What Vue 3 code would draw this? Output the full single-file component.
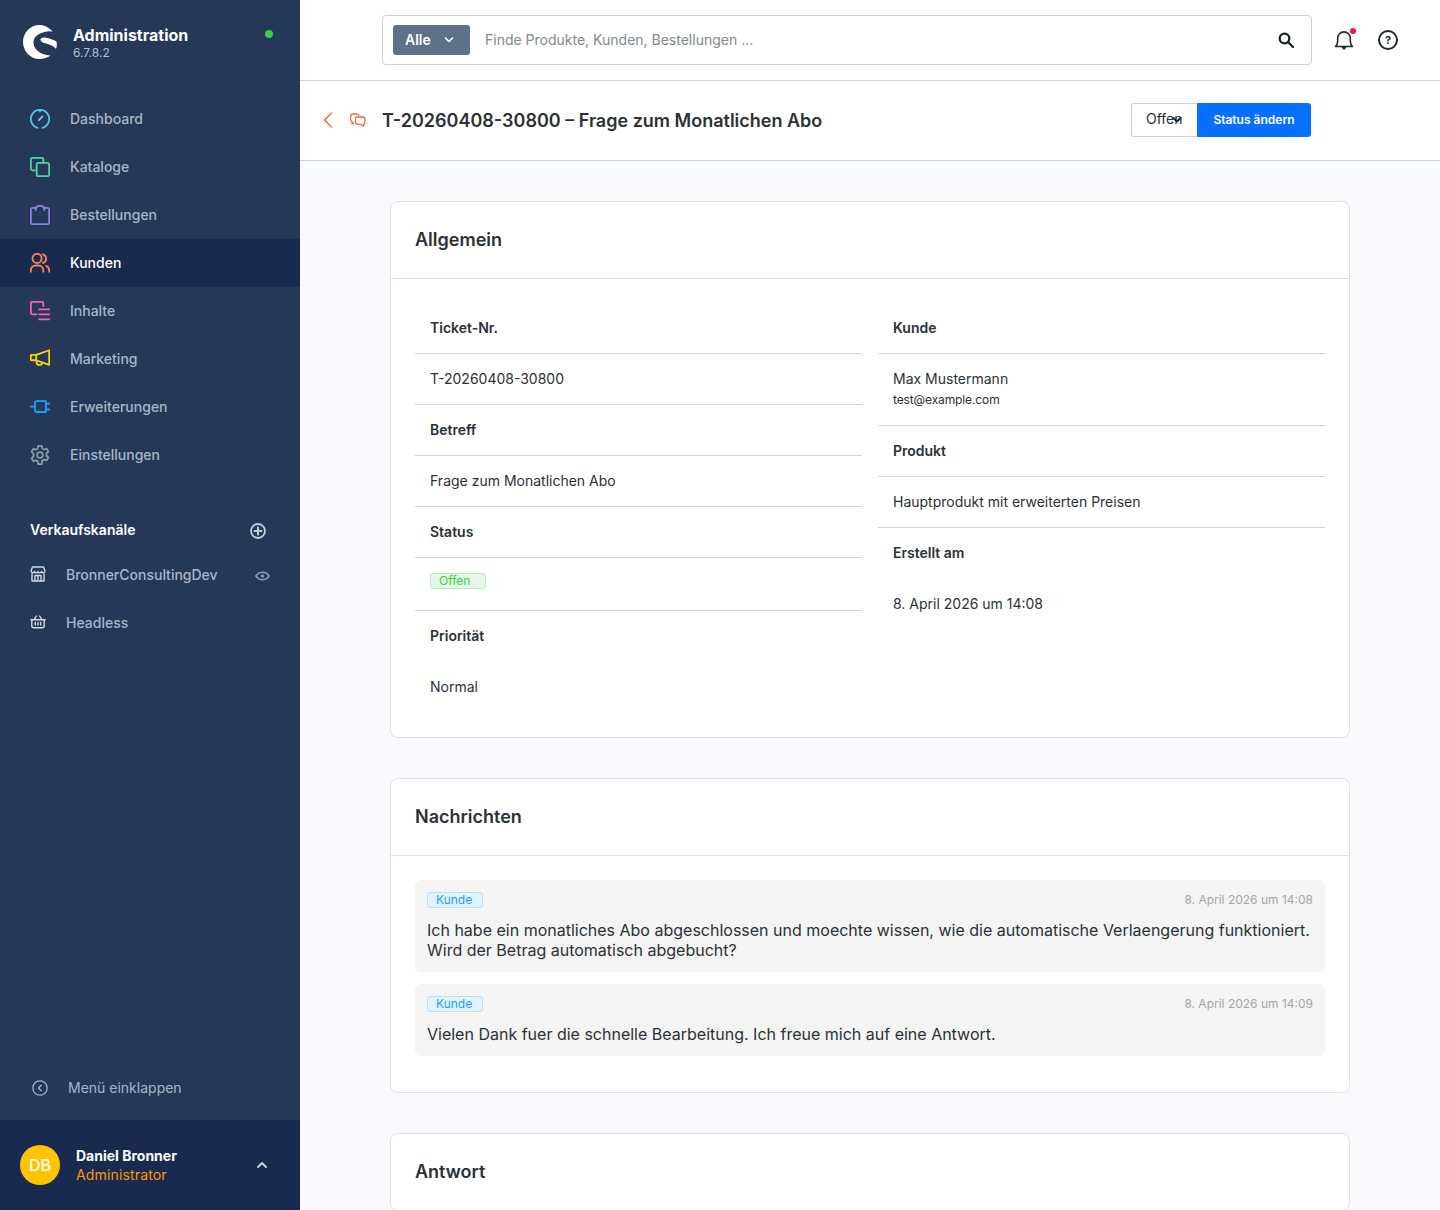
<template>
    <div class="admin">
        <aside class="sidebar">
            <div class="brand">
                <svg class="logo" viewBox="0 0 34 34">
                    <path fill="#fff" d="M29.500 6.500C26 2.500 21.500 0 16.500 0 7.400 0 0 7.600 0 17s7.400 17 16.500 17c4 0 8-1.200 11-3.500-7.500-.5-17-4.500-17-13 0-7 7.500-11 19-11.500z" />
                    <path fill="#fff" d="M17.500 14.500c0-1.800 2.500-2.500 5.500-1.800 4.500 1 8.500 2.300 10.500 3.800.5 2.500.5 5-.5 7.500-2.500-3.500-8-5-11.500-6-2.500-.7-4-1.700-4-3.500z" />
                </svg>
                <div class="brand-text">
                    <div class="brand-name">Administration</div>
                    <div class="brand-version">6.7.8.2</div>
                </div>
                <span class="status-dot"></span>
            </div>

            <nav class="nav">
                <a v-for="item in navItems" :key="item.label" class="nav-item" :class="{ active: item.active }">
                    <svg class="nav-icon" viewBox="0 0 24 24" fill="none" :stroke="item.color" stroke-width="2.200" stroke-linecap="round" stroke-linejoin="round">
                        <path v-for="d in item.paths" :key="d" :d="d" />
                    </svg>
                    <span class="nav-label">{{ item.label }}</span>
                </a>
            </nav>

            <div class="channels-head">
                <span class="channels-title">Verkaufskanäle</span>
                <svg class="plus" viewBox="0 0 16 16" fill="none" stroke="#c3cddc" stroke-width="1.800" stroke-linecap="round">
                    <circle cx="8" cy="8" r="7" />
                    <path d="M8 4.500v7M4.500 8h7" stroke-width="2" />
                </svg>
            </div>
            <a class="channel">
                <svg class="channel-icon" viewBox="0 0 16 16" fill="none" stroke="#d3d9e4" stroke-width="1.400" stroke-linejoin="round">
                    <path d="M2.500 1h11l1.500 4a1.800 1.800 0 0 1-3.500.5 1.800 1.800 0 0 1-3.500 0 1.800 1.800 0 0 1-3.500 0A1.800 1.800 0 0 1 1 5z" />
                    <path d="M2 7.500V15h12V7.500M5 15V9.500h6V15M8 9.500V15" />
                </svg>
                <span>BronnerConsultingDev</span>
                <svg class="eye" viewBox="0 0 16 10" fill="none" stroke="#8e9cb2" stroke-width="1.800">
                    <path d="M1 5c1.800-2.700 4.200-4 7-4s5.200 1.300 7 4c-1.800 2.700-4.200 4-7 4s-5.200-1.300-7-4z" />
                    <circle cx="8" cy="5" r="1.800" fill="#8e9cb2" stroke="none" />
                </svg>
            </a>
            <a class="channel">
                <svg class="channel-icon" viewBox="0 0 16 16" fill="none" stroke="#d3d9e4" stroke-width="1.400" stroke-linejoin="round" stroke-linecap="round">
                    <path d="M.8 5.800h14.400M1.800 5.800v6a2 2 0 0 0 2 2h8.400a2 2 0 0 0 2-2v-6M4 5.800 6.300 2M12 5.800 9.700 2M5.300 8.500v2.500M8 8.500v2.500M10.700 8.500v2.500" />
                </svg>
                <span>Headless</span>
            </a>

            <a class="collapse">
                <svg viewBox="0 0 16 16" fill="none" stroke="#a9b5c9" stroke-width="1.300" stroke-linecap="round" stroke-linejoin="round">
                    <circle cx="8" cy="8" r="7.200" />
                    <path d="M9.200 5.200 6.500 8l2.700 2.800" />
                </svg>
                <span class="nav-label">Menü einklappen</span>
            </a>

            <div class="user">
                <div class="avatar">DB</div>
                <div class="user-text">
                    <div class="user-name">Daniel Bronner</div>
                    <div class="user-role">Administrator</div>
                </div>
                <svg class="user-chevron" viewBox="0 0 12 8" fill="none" stroke="#c3cddc" stroke-width="2" stroke-linecap="round" stroke-linejoin="round">
                    <path d="M2 6l4-4 4 4" />
                </svg>
            </div>
        </aside>

        <main class="main">
            <header class="topbar">
                <div class="search">
                    <button class="search-type">
                        <span class="nudge">Alle</span>
                        <svg viewBox="0 0 10 6" fill="none" stroke="#fff" stroke-width="1.600" stroke-linecap="round" stroke-linejoin="round">
                            <path d="M1.500 1 5 4.500 8.500 1" />
                        </svg>
                    </button>
                    <span class="search-placeholder nudge">Finde Produkte, Kunden, Bestellungen ...</span>
                    <svg class="search-icon" viewBox="0 0 16 16" fill="none" stroke="#1a2129" stroke-width="2.300" stroke-linecap="round">
                        <circle cx="6.500" cy="6.500" r="4.800" />
                        <path d="M10.200 10.200 15 15" />
                    </svg>
                </div>
                <div class="bell">
                    <svg viewBox="0 0 20 22" fill="none" stroke="#1f2933" stroke-width="1.600" stroke-linecap="round" stroke-linejoin="round">
                        <path d="M1.500 17.500c1.400-1.200 2.200-3 2.200-5.500V9.200a6.300 6.300 0 0 1 12.600 0V12c0 2.500.8 4.300 2.200 5.500z" />
                        <path d="M8.500 18.300 10 20l1.500-1.700z" fill="#1f2933" />
                    </svg>
                    <span class="bell-dot"></span>
                </div>
                <div class="help">?</div>
            </header>

            <div class="smartbar">
                <svg class="back" viewBox="0 0 10 16" fill="none" stroke="#f56a38" stroke-width="1.400" stroke-linecap="round" stroke-linejoin="round">
                    <path d="M8.500 1 1.500 8l7 7" />
                </svg>
                <svg class="ticket" viewBox="0 0 16 14" fill="none" stroke="#f56a38" stroke-width="1.300" stroke-linejoin="round">
                    <path d="M4 9.500 2 11V8.800C1 8.200.6 7.400.6 6.300V3.500C.6 2 1.600 1 3 1h3.500c1.300 0 2.300.9 2.500 2" />
                    <path d="M7 4h5.500C14 4 15 5 15 6.400v2.300c0 1.200-.5 2-1.400 2.500V13.500l-2.700-2.200H8c-1.400 0-2.500-1.100-2.500-2.500V5.500C5.500 4.600 6 4 7 4z" />
                </svg>
                <h1 class="title">T-20260408-30800 – Frage zum Monatlichen Abo</h1>
                <div class="actions">
                    <div class="status-select">
                        Offen
                        <svg viewBox="0 0 10 6" fill="none" stroke="#1f2933" stroke-width="2" stroke-linecap="round" stroke-linejoin="round">
                            <path d="M1.500 1 5 4.500 8.500 1" />
                        </svg>
                    </div>
                    <button class="status-btn">Status ändern</button>
                </div>
            </div>

            <div class="content">
                <section class="card">
                    <h2 class="card-title">Allgemein</h2>
                    <div class="card-body columns">
                        <dl class="col">
                            <div class="cell head">Ticket-Nr.</div>
                            <div class="cell">T-20260408-30800</div>
                            <div class="cell head">Betreff</div>
                            <div class="cell">Frage zum Monatlichen Abo</div>
                            <div class="cell head">Status</div>
                            <div class="cell status-cell"><span class="badge green">Offen</span></div>
                            <div class="cell head plain">Priorität</div>
                            <div class="cell plain">Normal</div>
                        </dl>
                        <dl class="col">
                            <div class="cell head">Kunde</div>
                            <div class="cell">
                                Max Mustermann
                                <div class="email">test@example.com</div>
                            </div>
                            <div class="cell head">Produkt</div>
                            <div class="cell">Hauptprodukt mit erweiterten Preisen</div>
                            <div class="cell head plain">Erstellt am</div>
                            <div class="cell plain">8. April 2026 um 14:08</div>
                        </dl>
                    </div>
                </section>

                <section class="card">
                    <h2 class="card-title">Nachrichten</h2>
                    <div class="card-body messages">
                        <article v-for="msg in messages" :key="msg.date" class="message">
                            <div class="message-head">
                                <span class="badge blue">Kunde</span>
                                <span class="message-date">{{ msg.date }}</span>
                            </div>
                            <p class="message-text">{{ msg.text }}</p>
                        </article>
                    </div>
                </section>

                <section class="card">
                    <h2 class="card-title">Antwort</h2>
                </section>
            </div>
        </main>
    </div>
</template>

<script setup>
const navItems = [
    {
        label: 'Dashboard',
        color: '#55c8ea',
        paths: ['M9 22.600A11 11 0 1 1 15 22.600', 'M15 9 10.500 13.500', 'M12 1v2'],
    },
    {
        label: 'Kataloge',
        color: '#4ed3a5',
        paths: ['M6 16H3a2 2 0 0 1-2-2V3a2 2 0 0 1 2-2h11a2 2 0 0 1 2 2v3', 'M10 7h11a2 2 0 0 1 2 2v12a2 2 0 0 1-2 2H10a2 2 0 0 1-2-2V9a2 2 0 0 1 2-2z'],
    },
    {
        label: 'Bestellungen',
        color: '#8c80ec',
        paths: ['M7 3.500H3a2 2 0 0 0-2 2V21a2 2 0 0 0 2 2h18a2 2 0 0 0 2-2V5.500a2 2 0 0 0-2-2h-4', 'M7 6V4a5 3 0 0 1 10 0v2'],
    },
    {
        label: 'Kunden',
        color: '#f9835a',
        active: true,
        paths: ['M8.500 12a5.500 5.500 0 1 0 0-11 5.500 5.500 0 0 0 0 11z', 'M1 22.500V21a6 6 0 0 1 6-6h3a6 6 0 0 1 6 6v1.500', 'M15.500 1.500a5.500 5.500 0 0 1 0 10.500', 'M19.500 15.500A6 6 0 0 1 23 21v1.500'],
    },
    {
        label: 'Inhalte',
        color: '#f762b0',
        paths: ['M8 16H3a2 2 0 0 1-2-2V3a2 2 0 0 1 2-2h11a2 2 0 0 1 2 2v3', 'M11 10h12M11 16h12M11 22h12'],
    },
    {
        label: 'Marketing',
        color: '#ffd400',
        paths: ['M7.500 7 23 1.500V19L7.500 13.500z', 'M7.500 7H2a1 1 0 0 0-1 1v4.500a1 1 0 0 0 1 1h5.500', 'M8 14v2.500A2.500 2.500 0 0 0 10.500 19H12a2.500 2.500 0 0 0 2.500-2.500'],
    },
    {
        label: 'Erweiterungen',
        color: '#189eff',
        paths: ['M8 5h11v13H8a2 2 0 0 1-2-2V7a2 2 0 0 1 2-2z', 'M1 11.500h5M19 8h4M19 15h4'],
    },
    {
        label: 'Einstellungen',
        color: '#8d98ab',
        paths: ['M12 8.500a3.500 3.500 0 1 0 0 7 3.500 3.500 0 0 0 0-7z', 'M10 1h4l.8 3.200 2.100 1.200 3.100-1 2 3.500-2.300 2.300v2.400L22 15l-2 3.500-3.100-1-2.100 1.200L14 23h-4l-.8-3.300-2.100-1.200-3.100 1L2 16l2.300-2.800v-2.400L2 8l2-3.500 3.100 1 2.100-1.200z'],
    },
];

const messages = [
    {
        date: '8. April 2026 um 14:08',
        text: 'Ich habe ein monatliches Abo abgeschlossen und moechte wissen, wie die automatische Verlaengerung funktioniert. Wird der Betrag automatisch abgebucht?',
    },
    {
        date: '8. April 2026 um 14:09',
        text: 'Vielen Dank fuer die schnelle Bearbeitung. Ich freue mich auf eine Antwort.',
    },
];
</script>

<style scoped>
.admin {
    display: flex;
    height: 1210px;
    overflow: hidden;
    font-family: Inter, "Liberation Sans", sans-serif;
    color: #2b3136;
}

/* Sidebar */
.sidebar {
    width: 300px;
    flex: none;
    display: flex;
    flex-direction: column;
    background: #253858;
}

.brand {
    display: flex;
    align-items: center;
    height: 95px;
    padding: 0 27px 11px 23px;
    box-sizing: border-box;
}

.logo {
    width: 34px;
    height: 34px;
    margin-right: 16px;
}

.brand-text {
    padding-top: 2px;
}

.brand-name {
    color: #fff;
    font-size: 16px;
    font-weight: 700;
    line-height: 20px;
}

.brand-version {
    color: #b3bfd1;
    font-size: 12px;
    line-height: 16px;
}

.status-dot {
    width: 8px;
    height: 8px;
    border-radius: 50%;
    background: #37d046;
    margin-left: auto;
    margin-bottom: 16px;
}

.nav {
    display: flex;
    flex-direction: column;
}

.nav-item {
    display: flex;
    align-items: center;
    height: 48px;
    padding-left: 30px;
    color: #a9b5c9;
    font-size: 14px;
    font-weight: 500;
}

.nav-item.active {
    background: #182b4e;
    color: #fff;
}

.nav-label {
    padding-bottom: 2px;
}

.nav-icon {
    width: 20px;
    height: 20px;
    margin-right: 20px;
}

.channels-head {
    display: flex;
    align-items: center;
    justify-content: space-between;
    margin-top: 33px;
    height: 36px;
    padding: 0 34px 0 30px;
    color: #fff;
    font-size: 14px;
    font-weight: 600;
}

.channels-title {
    padding-bottom: 2px;
}

.plus {
    width: 16px;
    height: 16px;
    margin-top: 2px;
}

.channel {
    display: flex;
    align-items: center;
    height: 48px;
    padding: 0 30px;
    color: #a9b5c9;
    font-size: 14px;
    font-weight: 500;
}

.channels-head + .channel {
    margin-top: 2px;
}

.channel-icon {
    width: 16px;
    height: 16px;
    margin-right: 20px;
}

.eye {
    width: 15px;
    height: 10px;
    margin-left: auto;
    margin-top: 3px;
}

.collapse {
    display: flex;
    align-items: center;
    margin-top: auto;
    height: 64px;
    padding-left: 32px;
    color: #a9b5c9;
    font-size: 14px;
}

.collapse svg {
    width: 16px;
    height: 16px;
    margin-right: 20px;
}

.user {
    display: flex;
    align-items: center;
    height: 90px;
    padding: 0 32px 0 20px;
    background: #182b4e;
}

.avatar {
    width: 40px;
    height: 40px;
    border-radius: 50%;
    background: #ffc400;
    color: #fff;
    font-size: 16px;
    font-weight: 500;
    line-height: 40px;
    text-align: center;
    margin-right: 16px;
}

.user-name {
    color: #fff;
    font-size: 14px;
    font-weight: 700;
    line-height: 19px;
}

.user-role {
    color: #ff9800;
    font-size: 14px;
    line-height: 19px;
    letter-spacing: 0.15px;
}

.user-chevron {
    width: 12px;
    height: 8px;
    margin-left: auto;
}

/* Top bar */
.main {
    flex: 1;
    min-width: 0;
    display: flex;
    flex-direction: column;
    background: #f9fafe;
}

.topbar {
    display: flex;
    align-items: center;
    height: 80px;
    flex: none;
    padding: 0 42px 0 82px;
    background: #fff;
    border-bottom: 1px solid #d1d3da;
}

.search {
    display: flex;
    align-items: center;
    width: 930px;
    height: 50px;
    box-sizing: border-box;
    padding: 0 17px 0 10px;
    border: 1px solid #cfd1d8;
    border-radius: 4px;
}

.nudge {
    padding-bottom: 2px;
}

.search-type {
    display: flex;
    align-items: center;
    justify-content: space-between;
    width: 77px;
    height: 30px;
    padding: 0 16px 0 12px;
    box-sizing: border-box;
    border: 0;
    border-radius: 3px;
    background: #5d7189;
    color: #fff;
    font-family: inherit;
    font-size: 14px;
    font-weight: 600;
}

.search-type svg {
    width: 10px;
    height: 6px;
}

.search-placeholder {
    margin-left: 15px;
    color: #7f8893;
    font-size: 14px;
}

.search-icon {
    width: 16px;
    height: 16px;
    margin-left: auto;
}

.bell {
    position: relative;
    width: 20px;
    height: 22px;
    margin-left: 22px;
}

.bell svg {
    display: block;
    width: 20px;
    height: 22px;
}

.bell-dot {
    position: absolute;
    top: -1px;
    right: -2px;
    width: 6px;
    height: 6px;
    border-radius: 50%;
    background: #e9202e;
}

.help {
    width: 20px;
    height: 20px;
    box-sizing: border-box;
    margin-left: 24px;
    border: 2px solid #1f2933;
    border-radius: 50%;
    color: #1f2933;
    font-size: 11px;
    font-weight: 700;
    line-height: 16px;
    text-align: center;
}

/* Smart bar */
.smartbar {
    display: flex;
    align-items: center;
    height: 80px;
    flex: none;
    box-sizing: border-box;
    padding: 0 129px 0 23px;
    background: #fff;
    border-bottom: 1px solid #d1d3da;
}

.back {
    width: 10px;
    height: 16px;
    margin-right: 17px;
    margin-bottom: 1px;
}

.ticket {
    width: 16px;
    height: 14px;
    margin-right: 16px;
    margin-bottom: 1px;
}

.title {
    margin: 0;
    font-size: 18px;
    font-weight: 600;
    line-height: 28px;
    color: #2b3136;
}

.actions {
    display: flex;
    margin-left: auto;
    margin-bottom: 2px;
}

.status-select {
    position: relative;
    width: 66px;
    height: 34px;
    box-sizing: border-box;
    padding-left: 14px;
    border: 1px solid #cfd1d8;
    border-right: 0;
    border-radius: 3px 0 0 3px;
    font-size: 14px;
    line-height: 30px;
}

.status-select svg {
    position: absolute;
    top: 13px;
    left: 40px;
    width: 10px;
    height: 6px;
}

.status-btn {
    width: 114px;
    height: 34px;
    border: 0;
    border-radius: 0 3px 3px 0;
    background: #0870ff;
    color: #fff;
    font-family: inherit;
    font-size: 12px;
    font-weight: 600;
}

/* Cards */
.content {
    flex: 1;
    display: flex;
    flex-direction: column;
    gap: 40px;
    padding: 40px 90px 0;
    overflow: hidden;
}

.card {
    flex: none;
    background: #fff;
    border: 1px solid #dfe1e8;
    border-radius: 8px;
}

.card-title {
    margin: 0;
    padding: 0 24px;
    height: 76px;
    font-size: 18px;
    font-weight: 600;
    line-height: 76px;
    color: #2b3136;
}

.card-body {
    padding: 24px;
    border-top: 1px solid #dfe1e8;
}

.columns {
    display: grid;
    grid-template-columns: 1fr 1fr;
    column-gap: 16px;
}

.col {
    margin: 0;
}

.cell {
    box-sizing: border-box;
    min-height: 51px;
    padding: 15px 15px 16px;
    border-bottom: 1px solid #d1d3da;
    font-size: 14px;
    line-height: 19px;
    color: #2b3136;
}

.cell.head {
    font-weight: 600;
}

.cell.plain {
    border-bottom: 0;
}

.status-cell {
    height: 53px;
    padding-top: 15px;
}

.email {
    margin-top: 3px;
    font-size: 12px;
    line-height: 18px;
    letter-spacing: -0.12px;
}

.badge {
    display: inline-block;
    box-sizing: border-box;
    width: 56px;
    height: 16px;
    padding-left: 8px;
    border-radius: 3px;
    font-size: 12px;
    line-height: 14px;
    vertical-align: top;
}

.badge.green {
    background: #e6f7e8;
    border: 1px solid #b3eebb;
    color: #37d046;
}

.badge.blue {
    background: #e3f3ff;
    border: 1px solid #b7defc;
    color: #189eff;
}

/* Messages */
.messages {
    display: flex;
    flex-direction: column;
    gap: 12px;
    padding-bottom: 36px;
}

.message {
    padding: 12px;
    border-radius: 6px;
    background: #f4f4f4;
}

.message-head {
    display: flex;
    justify-content: space-between;
    align-items: center;
    height: 16px;
    margin-bottom: 12px;
}

.message-date {
    padding-bottom: 2px;
    color: #a3a6ab;
    font-size: 12px;
}

.message-text {
    margin: 0;
    font-size: 16px;
    line-height: 20px;
    color: #2b3136;
}
</style>

<style>
html,
body {
    margin: 0;
    height: 1210px;
    overflow: hidden;
}
</style>
